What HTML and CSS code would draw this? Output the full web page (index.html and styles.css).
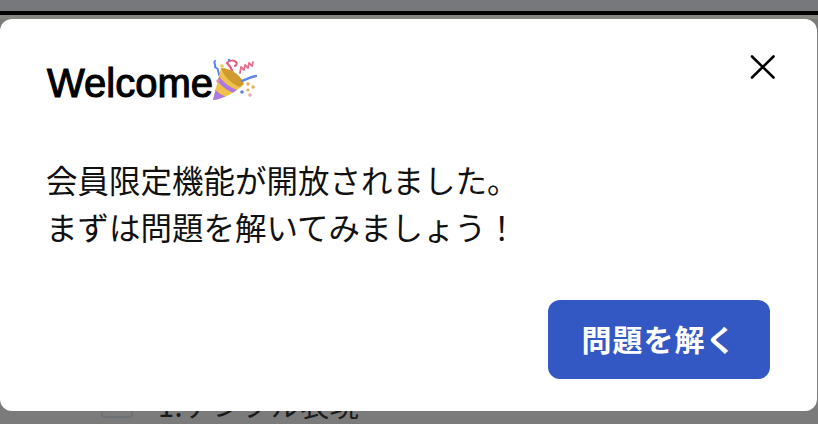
FILE: index.html
```html
<!DOCTYPE html>
<html lang="ja">
<head>
<meta charset="utf-8">
<title>Welcome</title>
<link rel="stylesheet" href="styles.css">
</head>
<body>
<div class="page">
  <div class="topbar"></div>
  <div class="topline"></div>
  <div class="under"></div>
  <div class="peek">
    <span class="checkbox"></span>
    <span class="peek-label">1.テンプル表現</span>
  </div>
</div>
<section class="modal">
  <header class="modal-head">
    <h2 class="title">Welcome<svg class="party" viewBox="0 0 44 44" aria-hidden="true">
      <defs><clipPath id="cone"><path d="M0 42L8 10C18 10 29 18 31 26C22 35 10 41 0 42Z"/></clipPath></defs>
      <path d="M2 3c-2 2 1 3 0 5s3 1 3 4 1 2 1 5" fill="none" stroke="#5c86e6" stroke-width="2" stroke-linecap="round"/>
      <path d="M20 15c-1-4-4-8-6-10 2-3 7-3 9-1 1 1 1 3-1 4" fill="none" stroke="#e2587c" stroke-width="2" stroke-linecap="round"/>
      <path d="M27 15l1-6 3 3 1-5 3 3 1-5 3 3 1-4" fill="none" stroke="#e8708e" stroke-width="1.800" stroke-linecap="round" stroke-linejoin="round"/>
      <path d="M0 42L8 10C18 10 29 18 31 26C22 35 10 41 0 42Z" fill="#f0c24a"/>
      <g clip-path="url(#cone)">
        <path d="M8 10C18 10 29 18 31 26L27 29C19 26 11 19 8 10Z" fill="#cf9a2e"/>
        <path d="M6 18C10 24 16 29 24 32L21 35C14 33 8 27 4 23Z" fill="#ac78e4"/>
        <path d="M2 31C6 36 10 38 15 39L9 42L0 42L0 36Z" fill="#ac78e4"/>
      </g>
      <path d="M29 23c5-2 9-4 14-5" fill="none" stroke="#5c86e6" stroke-width="2.400" stroke-linecap="round"/>
      <circle cx="9" cy="8" r="1.800" fill="#f0c840"/>
      <circle cx="16" cy="2" r="1.300" fill="#5c86e6"/>
      <circle cx="5" cy="23" r="1.700" fill="#e88aa0"/>
      <circle cx="29" cy="34" r="1.800" fill="#5c86e6"/>
      <circle cx="35" cy="26" r="1.700" fill="#eda84a"/>
      <circle cx="40" cy="29" r="1.700" fill="#eda84a"/>
      <circle cx="35" cy="32" r="1.500" fill="#eda84a"/>
      <circle cx="37" cy="37" r="1.800" fill="#eea3b6"/>
    </svg></h2>
    <button class="close" aria-label="閉じる">
      <svg viewBox="0 0 25 24"><path d="M2 1.500L23.500 22.500M23.500 1.500L2 22.500" fill="none" stroke="#000" stroke-width="2.600" stroke-linecap="round"/></svg>
    </button>
  </header>
  <p class="message">会員限定機能が開放されました。<br>まずは問題を解いてみましょう！</p>
  <footer class="modal-foot">
    <button class="solve">問題を解く</button>
  </footer>
</section>
</body>
</html>
```
FILE: styles.css
```css
html, body {
  margin: 0;
  padding: 0;
  height: 100%;
  overflow: hidden;
}
body {
  background: #7b7b7b;
  font-family: "Liberation Sans", "Noto Sans CJK JP", sans-serif;
  color: #000;
}
.page {
  height: 424px;
  display: flex;
  flex-direction: column;
}
.topbar {
  height: 11px;
  background: #76787c;
}
.topline {
  height: 4px;
  background: #000;
}
.under {
  height: 4px;
  background: #86867f;
}
.peek {
  margin-top: auto;
  display: flex;
  align-items: center;
  gap: 25px;
  padding: 0 0 5px 101px;
  height: 34px;
  color: #1a1a1a;
}
.checkbox {
  width: 32px;
  height: 32px;
  box-sizing: border-box;
  flex: none;
  border: 2px solid #6d7176;
  border-radius: 4px;
  background: #7b7b7b;
}
.peek-label {
  margin-top: 4px;
  font-size: 29px;
  letter-spacing: 0.5px;
  font-family: "Noto Sans CJK JP", sans-serif;
  white-space: nowrap;
}
.modal {
  position: absolute;
  left: 0;
  top: 19px;
  width: 817px;
  height: 392px;
  box-sizing: border-box;
  padding: 39px 42px 32px 47px;
  background: #fff;
  border-radius: 12px;
  display: flex;
  flex-direction: column;
}
.modal-head {
  display: flex;
  justify-content: space-between;
  align-items: flex-start;
}
.title {
  margin: 0;
  display: flex;
  align-items: flex-start;
  font-size: 40px;
  line-height: 50px;
  font-weight: 400;
  -webkit-text-stroke: 1.1px #000;
}
.party {
  width: 44px;
  height: 44px;
}
.close {
  width: 25px;
  height: 24px;
  padding: 0;
  margin: -3px 0 0 0;
  border: 0;
  background: none;
  display: flex;
}
.close svg {
  width: 100%;
  height: 100%;
}
.message {
  margin: 48px 0 0 -1px;
  font-size: 31.5px;
  line-height: 47px;
  font-family: "Noto Sans CJK JP", sans-serif;
  font-weight: 400;
  color: #111;
}
.modal-foot {
  margin-top: auto;
  margin-right: 5px;
  display: flex;
  justify-content: flex-end;
}
.solve {
  width: 222px;
  height: 79px;
  box-sizing: border-box;
  padding: 0 0 3px;
  border: 0;
  border-radius: 12px;
  background: #3358c4;
  color: #fff;
  font-family: "Noto Sans CJK JP", sans-serif;
  font-size: 30px;
  font-weight: 700;
  letter-spacing: 1px;
}
```
